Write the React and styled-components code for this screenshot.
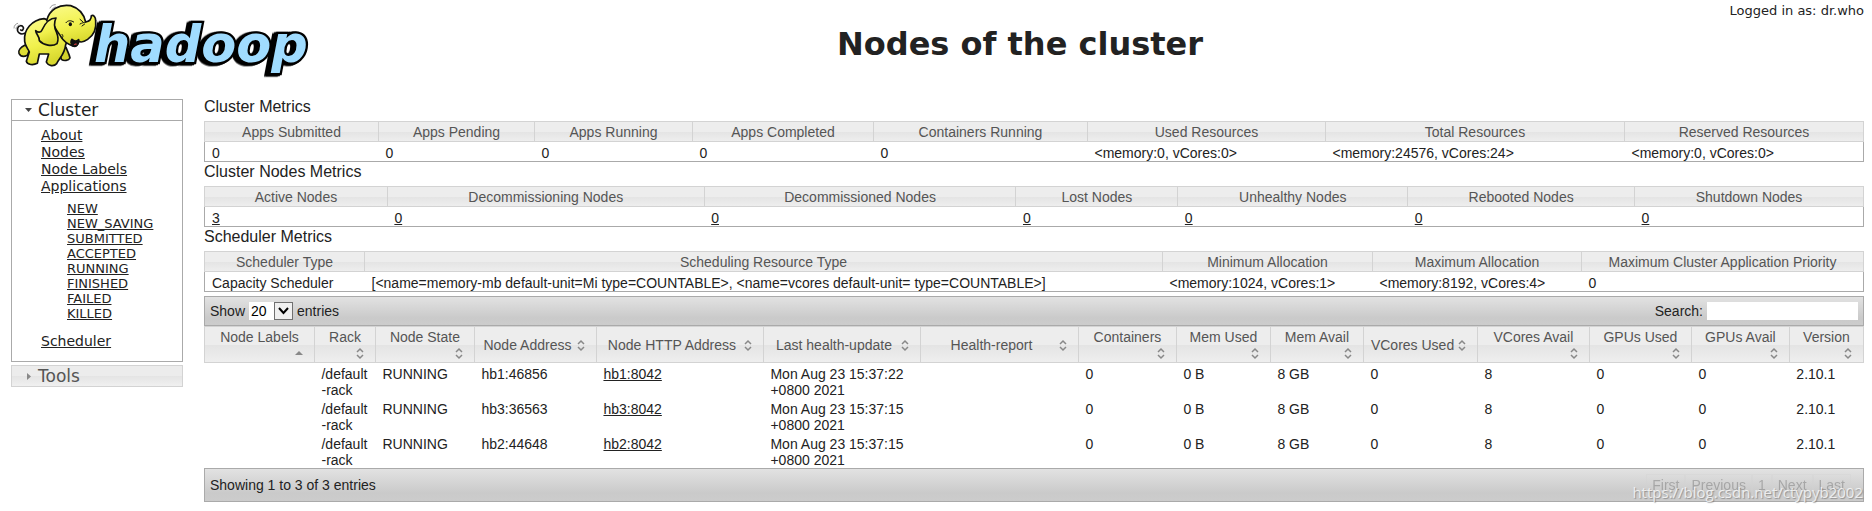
import React from "react";
import styled, { createGlobalStyle, css } from "styled-components";

const SANS = '"Liberation Sans", Arial, Helvetica, sans-serif';
const VERDANA = '"DejaVu Sans", Verdana, sans-serif';

const GlobalStyle = createGlobalStyle`
  * { box-sizing: border-box; }
  body {
    margin: 0;
    background: #fff;
    color: #222;
    font: 14px/16px ${SANS};
  }
  a { color: #222; text-decoration: underline; }
`;

const Header = styled.header`
  display: grid;
  grid-template-columns: 330px 1fr 154px;
  height: 90px;
  padding-right: 8px;
`;

const Title = styled.h1`
  margin: 25px 0 0;
  text-align: center;
  font: bold 32px/38px ${VERDANA};
`;

const Login = styled.div`
  padding-top: 3px;
  text-align: right;
  white-space: nowrap;
  font: 13px/16px ${VERDANA};
`;

const Layout = styled.div`
  display: grid;
  grid-template-columns: 172px minmax(0, 1fr);
  column-gap: 21px;
  align-items: start;
  padding: 7px 8px 8px 11px;
`;

const Nav = styled.nav`
  display: flex;
  flex-direction: column;
  padding-top: 2px;
  font-family: ${VERDANA};
`;

const NavHeading = styled.button`
  display: flex;
  align-items: center;
  gap: 5px;
  height: 22px;
  padding: 0 0 0 12px;
  border: 1px solid ${(p) => (p.$open ? "#aaa" : "#d3d3d3")};
  background: ${(p) =>
    p.$open ? "#fff" : "linear-gradient(#ececec 0 50%, #e4e4e4 50%, #f0f0f0)"};
  color: ${(p) => (p.$open ? "#222" : "#555")};
  font: 17px/20px ${VERDANA};
`;

const NavPanel = styled.div`
  margin-bottom: 3px;
  padding: 6px 0 11px 29px;
  border: 1px solid #aaa;
  border-top: 0;
`;

const NavList = styled.ul`
  margin: 0;
  padding: 0;
  list-style: none;
  font-size: 14px;
  line-height: 17px;
`;

const SubList = styled(NavList)`
  margin: 6px 0 12px;
  padding-left: 26px;
  font-size: 13px;
  line-height: 15px;
`;

const Content = styled.main`
  display: flex;
  flex-direction: column;
`;

const SectionTitle = styled.h2`
  margin: 0;
  padding-bottom: 5px;
  font: 16px/19px ${SANS};
`;

const HEAD_FILL = "linear-gradient(#ededed 0 50%, #e4e4e4 50%, #efefef)";

const DataTable = styled.table`
  width: 100%;
  table-layout: fixed;
  border-collapse: collapse;
`;

const MetricsTable = styled(DataTable)`
  border: 1px solid #aaa;
`;

const Col = styled.col`
  width: ${(p) => p.$share}%;
`;

const HeadRow = styled.tr`
  background: ${HEAD_FILL};
`;

const Th = styled.th`
  padding: 2px 7px 1px;
  border: 1px solid #d3d3d3;
  color: #555;
  font-weight: normal;
  white-space: nowrap;
`;

const Td = styled.td`
  padding: 3px 7px 0;
  vertical-align: top;
  white-space: nowrap;
`;

const NodeTh = styled(Th)`
  padding: 2px 7px 1px;
`;

const NodeTd = styled(Td)`
  height: 35px;
  white-space: normal;
`;

const SortButton = styled.button`
  display: flex;
  align-items: center;
  width: 100%;
  min-height: 32px;
  padding: 0;
  border: 0;
  background: none;
  color: inherit;
  font: 14px/16px ${SANS};
  white-space: nowrap;
  ${(p) => p.$stacked && css`flex-direction: column;`}
`;

const SortLabel = styled.span`
  flex: 1;
`;

const SortIcon = styled.svg`
  flex: none;
  width: 16px;
  height: 16px;
  align-self: ${(p) => (p.$stacked ? "flex-end" : "center")};
`;

const Bar = styled.div`
  display: flex;
  align-items: center;
  justify-content: space-between;
  padding: 0 5px;
  border: 1px solid #aaa;
  background: linear-gradient(#e2e2e2, #cacaca 75%, #cccccc);
`;

const Toolbar = styled(Bar)`
  height: 30px;
  margin-top: 4px;
`;

const Footer = styled(Bar)`
  position: relative;
  height: 34px;
  padding-right: 12px;
`;

const FieldLabel = styled.label`
  display: flex;
  align-items: center;
  gap: 4px;
`;

const SelectBox = styled.span`
  position: relative;
  display: flex;
`;

const Select = styled.select`
  appearance: none;
  width: 44px;
  height: 18px;
  padding: 0 2px;
  border: 0;
  border-radius: 0;
  background: #fff;
  color: #000;
  font: 14px/18px ${SANS};
`;

const SelectArrow = styled.svg`
  position: absolute;
  top: 0;
  right: 0;
  width: 19px;
  height: 18px;
  pointer-events: none;
`;

const SearchInput = styled.input`
  width: 151px;
  height: 18px;
  padding: 0 2px;
  border: 0;
  background: #fff;
  font: 14px/18px ${SANS};
`;

const Pager = styled.div`
  display: flex;
  opacity: 0.35;
`;

const PageButton = styled.button`
  height: 22px;
  padding: 0 5px;
  border: 1px solid #d3d3d3;
  background: none;
  color: #555;
  font: 14px/20px ${SANS};
`;

const Watermark = styled.span`
  position: absolute;
  right: 0;
  bottom: 0;
  color: rgba(255, 255, 255, 0.75);
  text-shadow: 1px 1px 1px rgba(90, 90, 90, 0.5);
  font: 15px/18px "Open Sans", "Noto Sans", sans-serif;
`;

const LogoSvg = styled.svg`
  display: block;
  width: 330px;
  height: 90px;
`;

const Wordmark = styled.text`
  font: oblique bold 153px ${VERDANA};
  fill: #a0dcff;
  stroke: #000;
  stroke-width: 14px;
  paint-order: stroke;
  filter: drop-shadow(-6px 2px 0 #000) drop-shadow(-6px 2px 0 #000);
`;

function Logo() {
  return (
    <LogoSvg viewBox="0 0 990 270" role="img" aria-label="hadoop">
      <defs>
        <linearGradient id="hide" x1="0" y1="0" x2="0.3" y2="1">
          <stop offset="0" stopColor="#fbfb8c" />
          <stop offset="0.6" stopColor="#f1f14d" />
          <stop offset="1" stopColor="#d8d82e" />
        </linearGradient>
      </defs>
      <Wordmark x="282" y="185">hadoop</Wordmark>
      <g stroke="#111" strokeWidth="5" strokeLinecap="round" strokeLinejoin="round" fill="none">
        <path d="M74 100 C60 106 50 96 53 85 C56 75 66 75 70 82 C72 88 66 94 62 90" />
        <path d="M74 136 C62 142 54 152 57 160 C62 170 72 171 82 166 L92 142 Z" fill="#dede35" />
        <path d="M176 150 L184 178 C192 184 206 182 210 174 C208 162 202 154 198 142 Z" fill="#d2d22c" />
        <path d="M132 56 C96 60 70 88 74 124 C75 138 84 146 88 156 L79 184 C82 195 100 196 112 190 L118 162 L146 162 L139 186 C145 199 162 200 170 191 C178 174 194 164 197 134 C208 120 190 70 132 56 Z" fill="url(#hide)" />
        <path d="M140 62 C148 28 178 12 212 17 C242 26 252 44 257 66 C268 64 274 56 274 47 C281 44 287 52 287 62 C290 88 281 106 263 118 C250 127 240 128 234 122 C236 134 228 142 218 138 C206 133 190 122 184 112 C180 104 172 96 166 84 C158 70 150 64 140 62 Z" fill="url(#hide)" />
        <path d="M168 54 C148 54 134 72 126 90 C122 100 112 96 107 92 C108 104 120 110 118 122 C130 136 157 141 171 131 C176 120 174 108 170 98 C162 82 162 66 168 54 Z" fill="url(#hide)" />
        <path d="M216 118 C222 125 230 125 236 119 C238 132 228 141 218 137 C213 132 212 124 216 118 Z" fill="#111" />
        <path d="M221 136 C223 130 230 129 232 133 Z" fill="#d93c3c" stroke="none" />
        <path d="M198 68 C204 60 214 61 221 66 M240 72 C246 68 252 68 258 66 M240 58 L248 65 M246 78 L254 72 M186 103 C190 107 190 111 186 114" strokeWidth="3" />
        <ellipse cx="211" cy="73" rx="5" ry="6" fill="#111" stroke="none" />
        <path d="M150 24 C153 17 159 14 166 14 M155 31 C157 25 161 22 167 21 M42 84 C42 76 47 72 53 70 M48 86 C49 80 53 77 57 75" strokeWidth="2" stroke="#666" />
      </g>
    </LogoSvg>
  );
}

const metrics = [
  {
    title: "Cluster Metrics",
    widths: [174, 156, 158, 181, 214, 238, 299, 239],
    heads: ["Apps Submitted", "Apps Pending", "Apps Running", "Apps Completed", "Containers Running", "Used Resources", "Total Resources", "Reserved Resources"],
    cells: ["0", "0", "0", "0", "0", "<memory:0, vCores:0>", "<memory:24576, vCores:24>", "<memory:0, vCores:0>"],
  },
  {
    title: "Cluster Nodes Metrics",
    linked: true,
    widths: [183, 317, 312, 162, 230, 227, 229],
    heads: ["Active Nodes", "Decommissioning Nodes", "Decommissioned Nodes", "Lost Nodes", "Unhealthy Nodes", "Rebooted Nodes", "Shutdown Nodes"],
    cells: ["3", "0", "0", "0", "0", "0", "0"],
  },
  {
    title: "Scheduler Metrics",
    widths: [160, 798, 210, 209, 282],
    heads: ["Scheduler Type", "Scheduling Resource Type", "Minimum Allocation", "Maximum Allocation", "Maximum Cluster Application Priority"],
    cells: [
      "Capacity Scheduler",
      "[<name=memory-mb default-unit=Mi type=COUNTABLE>, <name=vcores default-unit= type=COUNTABLE>]",
      "<memory:1024, vCores:1>",
      "<memory:8192, vCores:4>",
      "0",
    ],
  },
];

const nodeColumns = [
  { label: "Node Labels", width: 110, stacked: true, sorted: true },
  { label: "Rack", width: 61, stacked: true },
  { label: "Node State", width: 99, stacked: true },
  { label: "Node Address", width: 122 },
  { label: "Node HTTP Address", width: 167 },
  { label: "Last health-update", width: 157 },
  { label: "Health-report", width: 158 },
  { label: "Containers", width: 98, stacked: true },
  { label: "Mem Used", width: 94, stacked: true },
  { label: "Mem Avail", width: 93, stacked: true },
  { label: "VCores Used", width: 114 },
  { label: "VCores Avail", width: 112, stacked: true },
  { label: "GPUs Used", width: 102, stacked: true },
  { label: "GPUs Avail", width: 98, stacked: true },
  { label: "Version", width: 74, stacked: true },
];

const nodes = [
  { address: "hb1:46856", http: "hb1:8042", update: "Mon Aug 23 15:37:22 +0800 2021" },
  { address: "hb3:36563", http: "hb3:8042", update: "Mon Aug 23 15:37:15 +0800 2021" },
  { address: "hb2:44648", http: "hb2:8042", update: "Mon Aug 23 15:37:15 +0800 2021" },
];

const appStates = ["NEW", "NEW_SAVING", "SUBMITTED", "ACCEPTED", "RUNNING", "FINISHED", "FAILED", "KILLED"];

function Columns({ widths }) {
  const total = widths.reduce((sum, w) => sum + w, 0);
  return (
    <colgroup>
      {widths.map((w, i) => (
        <Col key={i} $share={(w / total) * 100} />
      ))}
    </colgroup>
  );
}

function Metrics({ title, widths, heads, cells, linked }) {
  return (
    <section>
      <SectionTitle>{title}</SectionTitle>
      <MetricsTable>
        <Columns widths={widths} />
        <thead>
          <HeadRow>{heads.map((h) => <Th key={h} scope="col">{h}</Th>)}</HeadRow>
        </thead>
        <tbody>
          <tr>
            {cells.map((c, i) => (
              <Td key={i}>{linked ? <a href="#nodes">{c}</a> : c}</Td>
            ))}
          </tr>
        </tbody>
      </MetricsTable>
    </section>
  );
}

function SortHeader({ label, stacked, sorted }) {
  return (
    <NodeTh scope="col" aria-sort={sorted ? "ascending" : undefined}>
      <SortButton type="button" $stacked={stacked}>
        <SortLabel>{label}</SortLabel>
        <SortIcon viewBox="0 0 16 16" $stacked={stacked} aria-hidden="true">
          {sorted ? (
            <path d="M4 10 L8 6 L12 10 Z" fill="#888" />
          ) : (
            <path d="M5 7 L8 4 L11 7 M5 10 L8 13 L11 10" fill="none" stroke="#888" strokeWidth="1.5" />
          )}
        </SortIcon>
      </SortButton>
    </NodeTh>
  );
}

export default function App() {
  return (
    <>
      <GlobalStyle />
      <Header>
        <Logo />
        <Title>Nodes of the cluster</Title>
        <Login>Logged in as: dr.who</Login>
      </Header>
      <Layout>
        <Nav>
          <NavHeading type="button" $open aria-expanded="true">
            <svg width="9" height="9" viewBox="0 0 9 9" aria-hidden="true">
              <path d="M1 2 H8 L4.5 6 Z" fill="#454545" />
            </svg>
            Cluster
          </NavHeading>
          <NavPanel>
            <NavList>
              <li><a href="#about">About</a></li>
              <li><a href="#nodes">Nodes</a></li>
              <li><a href="#labels">Node Labels</a></li>
              <li>
                <a href="#apps">Applications</a>
                <SubList>
                  {appStates.map((s) => (
                    <li key={s}><a href={`#apps-${s}`}>{s}</a></li>
                  ))}
                </SubList>
              </li>
              <li><a href="#scheduler">Scheduler</a></li>
            </NavList>
          </NavPanel>
          <NavHeading type="button" aria-expanded="false">
            <svg width="9" height="9" viewBox="0 0 9 9" aria-hidden="true">
              <path d="M3 1 V8 L7 4.5 Z" fill="#888" />
            </svg>
            Tools
          </NavHeading>
        </Nav>
        <Content>
          {metrics.map((m) => <Metrics key={m.title} {...m} />)}
          <Toolbar>
            <FieldLabel>
              Show
              <SelectBox>
                <Select defaultValue="20">
                  <option>20</option>
                  <option>40</option>
                  <option>60</option>
                  <option>80</option>
                  <option>100</option>
                </Select>
                <SelectArrow viewBox="0 0 19 18" aria-hidden="true">
                  <rect x="0.5" y="0.5" width="18" height="17" fill="#f0f0f0" stroke="#707070" />
                  <path d="M5 6 L9.5 11 L14 6" fill="none" stroke="#000" strokeWidth="2" />
                </SelectArrow>
              </SelectBox>
              entries
            </FieldLabel>
            <FieldLabel>
              Search:
              <SearchInput type="text" />
            </FieldLabel>
          </Toolbar>
          <DataTable>
            <Columns widths={nodeColumns.map((c) => c.width)} />
            <thead>
              <HeadRow>
                {nodeColumns.map((c) => <SortHeader key={c.label} {...c} />)}
              </HeadRow>
            </thead>
            <tbody>
              {nodes.map((n) => (
                <tr key={n.address}>
                  <NodeTd />
                  <NodeTd>/default<wbr />-rack</NodeTd>
                  <NodeTd>RUNNING</NodeTd>
                  <NodeTd>{n.address}</NodeTd>
                  <NodeTd><a href={`#${n.http}`}>{n.http}</a></NodeTd>
                  <NodeTd>{n.update}</NodeTd>
                  <NodeTd />
                  <NodeTd>0</NodeTd>
                  <NodeTd>0 B</NodeTd>
                  <NodeTd>8 GB</NodeTd>
                  <NodeTd>0</NodeTd>
                  <NodeTd>8</NodeTd>
                  <NodeTd>0</NodeTd>
                  <NodeTd>0</NodeTd>
                  <NodeTd>2.10.1</NodeTd>
                </tr>
              ))}
            </tbody>
          </DataTable>
          <Footer>
            <span>Showing 1 to 3 of 3 entries</span>
            <Pager>
              {["First", "Previous", "1", "Next", "Last"].map((p) => (
                <PageButton key={p} type="button">{p}</PageButton>
              ))}
            </Pager>
            <Watermark>https://blog.csdn.net/ctypyb2002</Watermark>
          </Footer>
        </Content>
      </Layout>
    </>
  );
}
